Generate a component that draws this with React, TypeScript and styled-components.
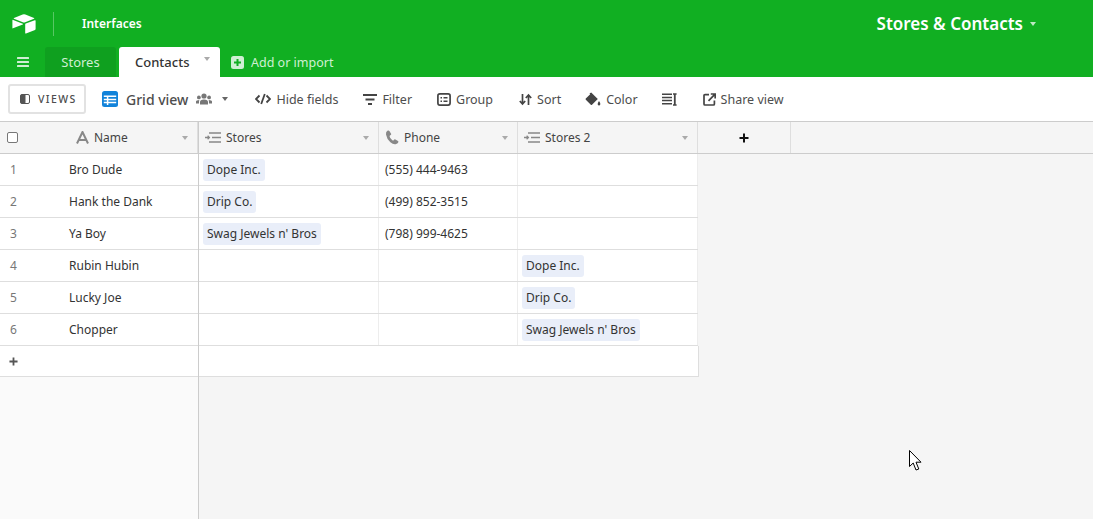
import React from 'react'
import styled, { createGlobalStyle } from 'styled-components'

const GlobalStyle = createGlobalStyle`
  html, body { margin: 0; padding: 0; height: 100%; overflow: hidden; }
  body { font-family: "Noto Sans", "Open Sans", sans-serif; background: #f5f5f5; color: #333; }
  #root { height: 100%; }
`

const Page = styled.div`
  position: relative;
  display: flex;
  flex-direction: column;
  width: 1093px;
  height: 519px;
  overflow: hidden;
`

// Header
const TopBar = styled.header`
  display: flex;
  align-items: center;
  height: 47px;
  padding-left: 12px;
  background: #11af22;
  color: #fff;
`
const Divider = styled.div`
  width: 1px;
  height: 24px;
  margin: 0 28px 0 17px;
  background: rgba(255, 255, 255, 0.3);
`
const InterfacesLink = styled.span`
  font-size: 12px;
  font-weight: 600;
`
const BaseName = styled.div`
  display: flex;
  align-items: center;
  gap: 7px;
  margin-left: auto;
  margin-right: 57px;
  font-size: 17px;
  font-weight: 600;
`
const Caret = styled.span<{ $color?: string }>`
  width: 0;
  height: 0;
  border-left: 3.5px solid transparent;
  border-right: 3.5px solid transparent;
  border-top: 4px solid ${({ $color }) => $color || '#999'};
`

// Tabs
const TabBar = styled.nav`
  display: flex;
  align-items: flex-end;
  height: 30px;
  background: #11af22;
`
const MenuButton = styled.div`
  display: flex;
  align-items: center;
  justify-content: center;
  width: 45px;
  height: 30px;
  color: #cfefd3;
`
const Tab = styled.div<{ $active?: boolean }>`
  position: relative;
  display: flex;
  align-items: center;
  height: 30px;
  box-sizing: border-box;
  border-radius: 3px 3px 0 0;
  font-size: 13px;
  ${({ $active }) =>
    $active
      ? `width: 101px; margin-left: 3px; padding-left: 16px; background: #fff; color: #333; font-weight: 500;`
      : `width: 71px; justify-content: center; background: #0fa01f; color: #cfefd3;`}
`
const TabCaret = styled.span`
  position: absolute;
  top: 10px;
  right: 10px;
  width: 0;
  height: 0;
  border-left: 3.5px solid transparent;
  border-right: 3.5px solid transparent;
  border-top: 4px solid #aaa;
`
const AddTable = styled.div`
  display: flex;
  align-items: center;
  gap: 7px;
  height: 30px;
  margin-left: 11px;
  font-size: 12.5px;
  color: #cfefd3;
`

// Toolbar
const Toolbar = styled.div`
  display: flex;
  align-items: center;
  height: 44px;
  padding-left: 8px;
  background: #fff;
  border-bottom: 1px solid #ccc;
  font-size: 12.5px;
  color: #4d4d4d;
`
const ViewsButton = styled.div`
  display: flex;
  align-items: center;
  gap: 8px;
  box-sizing: border-box;
  width: 78px;
  height: 30px;
  padding-left: 10px;
  border: 2px solid #e2e2e2;
  border-radius: 3px;
  font-size: 10.5px;
  font-weight: 500;
  letter-spacing: 1.4px;
`
const ViewName = styled.div`
  display: flex;
  align-items: center;
  margin-left: 16px;
  font-size: 14px;
  font-weight: 500;
`
const ToolItem = styled.div<{ $left: number }>`
  display: flex;
  align-items: center;
  gap: 5px;
  margin-left: ${({ $left }) => $left}px;
  white-space: nowrap;
`

// Grid
const GridArea = styled.main`
  flex: 1;
  display: flex;
  min-height: 0;
`
const LeftPane = styled.section`
  width: 198px;
  border-right: 1px solid #ccc;
  background: #fafafa;
`
const RightPane = styled.section`
  flex: 1;
  background: #f5f5f5;
`
const HeaderRow = styled.div`
  display: flex;
  height: 31px;
  background: #f5f5f5;
  border-bottom: 1px solid #ccc;
`
const HeaderCell = styled.div<{ $width: number; $left?: number }>`
  display: flex;
  align-items: center;
  gap: 5px;
  box-sizing: border-box;
  width: ${({ $width }) => $width}px;
  padding: 0 9px 0 ${({ $left }) => $left ?? 6}px;
  border-right: 1px solid #dedede;
  font-size: 12px;
  color: #444;
  ${Caret} { margin-left: auto; }
`
const AddField = styled.div`
  display: flex;
  align-items: center;
  justify-content: center;
  box-sizing: border-box;
  width: 93px;
  border-right: 1px solid #dedede;
`
const RowCheck = styled.div`
  box-sizing: border-box;
  width: 11px;
  height: 11px;
  margin: 0 54px 0 7px;
  border: 1px solid #777;
  border-radius: 2px;
  background: #fff;
`
const Row = styled.div<{ $width?: number }>`
  display: flex;
  height: 31px;
  width: ${({ $width }) => ($width ? `${$width}px` : 'auto')};
  background: #fff;
  border-bottom: 1px solid #dedede;
`
const RowNumber = styled.div`
  display: flex;
  align-items: center;
  width: 69px;
  padding-left: 10px;
  box-sizing: border-box;
  font-size: 12px;
  color: #777;
`
const NameCell = styled.div`
  display: flex;
  align-items: center;
  font-size: 12px;
  color: #333;
`
const Cell = styled.div<{ $width: number }>`
  display: flex;
  align-items: center;
  box-sizing: border-box;
  width: ${({ $width }) => $width}px;
  padding: 0 4px;
  border-right: 1px solid #ededed;
  font-size: 12px;
  color: #333;
`
const PhoneText = styled.span`
  padding-left: 2px;
`
const Chip = styled.span`
  padding: 2px 4px;
  border-radius: 3px;
  background: #e9eef9;
  line-height: 18px;
  white-space: nowrap;
`
const AddRow = styled.div`
  display: flex;
  align-items: center;
  height: 30px;
  padding-left: 9px;
  background: #fff;
  border-bottom: 1px solid #dedede;
`
const EmptyAddRow = styled.div`
  width: 499px;
  height: 30px;
  background: #fff;
  border-bottom: 1px solid #dedede;
  border-right: 1px solid #dedede;
`
const Pointer = styled.svg`
  position: absolute;
  left: 909px;
  top: 450px;
`

const AirtableLogo = () => (
  <svg width="24" height="20" viewBox="0 0 24 20" fill="#fff">
    <path d="M10.6 0.6 L2 4 Q1.3 4.4 2 4.8 L10.8 8.2 Q12 8.6 13.2 8.2 L22 4.8 Q22.7 4.4 22 4 L13.4 0.6 Q12 0.1 10.6 0.6Z" />
    <path d="M13.2 10.4 V19 Q13.2 19.8 14 19.5 L23 16 Q23.6 15.7 23.6 15 V6.8 Q23.6 6 22.8 6.3 L13.8 9.6 Q13.2 9.8 13.2 10.4Z" />
    <path d="M0.4 6.4 V14 Q0.4 14.6 1 14.3 L10.8 10.4 Q11.4 10 10.8 9.7 L1.2 5.9 Q0.4 5.6 0.4 6.4Z" />
  </svg>
)

const MenuIcon = () => (
  <svg width="12" height="10" viewBox="0 0 12 10" fill="currentColor">
    <rect width="12" height="2" rx="0.5" />
    <rect y="4" width="12" height="2" rx="0.5" />
    <rect y="8" width="12" height="2" rx="0.5" />
  </svg>
)

const PlusSquare = () => (
  <svg width="13" height="13" viewBox="0 0 13 13">
    <rect width="13" height="13" rx="2.5" fill="#cfefd3" />
    <path d="M6.5 3v7M3 6.5h7" stroke="#11af22" strokeWidth="2" />
  </svg>
)

const SidebarIcon = () => (
  <svg width="10" height="10" viewBox="0 0 10 10">
    <rect x="0.5" y="0.5" width="9" height="9" rx="1.5" fill="none" stroke="#555" />
    <rect x="0.5" y="0.5" width="5" height="9" rx="1" fill="#555" />
  </svg>
)

const GridIcon = () => (
  <svg width="16" height="16" viewBox="0 0 16 16">
    <rect width="16" height="16" rx="2.5" fill="#1283da" />
    <path d="M1.8 5.2h12.4M1.8 8.4h12.4M1.8 11.6h12.4M5.6 5v9" stroke="#fff" strokeWidth="1.5" />
  </svg>
)

const PeopleIcon = () => (
  <svg width="16" height="12" viewBox="0 0 16 12" fill="#777">
    <circle cx="8" cy="3" r="2.6" />
    <circle cx="2.9" cy="4.4" r="1.9" />
    <circle cx="13.1" cy="4.4" r="1.9" />
    <path d="M4 11.5 V9 Q4 6.4 8 6.4 Q12 6.4 12 9 V11.5Z" />
    <path d="M0 10.5 V8.6 Q0 7 3.3 7 Q2.9 8 3 10.5Z" />
    <path d="M16 10.5 V8.6 Q16 7 12.7 7 Q13.1 8 13 10.5Z" />
  </svg>
)

const HideIcon = () => (
  <svg width="16" height="12" viewBox="0 0 16 12" fill="none" stroke="#444" strokeWidth="1.8">
    <path d="M4.5 2.5 L1 6 L4.5 9.5" />
    <path d="M11.5 2.5 L15 6 L11.5 9.5" />
    <path d="M9.8 1 L6.2 11" />
  </svg>
)

const FilterIcon = () => (
  <svg width="14" height="11" viewBox="0 0 14 11" fill="#444">
    <rect width="14" height="2" />
    <rect x="2.5" y="4.5" width="9" height="2" />
    <rect x="5" y="9" width="4" height="2" />
  </svg>
)

const GroupIcon = () => (
  <svg width="14" height="13" viewBox="0 0 14 13" fill="none" stroke="#444">
    <rect x="0.9" y="0.9" width="12.2" height="11.2" rx="2" strokeWidth="1.7" />
    <path d="M3.5 4.7h1.5M6.5 4.7h4M3.5 8.2h1.5M6.5 8.2h4" strokeWidth="1.5" />
  </svg>
)

const SortIcon = () => (
  <svg width="13" height="13" viewBox="0 0 13 13" fill="none" stroke="#444" strokeWidth="1.7">
    <path d="M3.5 1v10M0.8 8 L3.5 11 L6.2 8" />
    <path d="M9.5 12V2M6.8 5 L9.5 2 L12.2 5" />
  </svg>
)

const ColorIcon = () => (
  <svg width="16" height="14" viewBox="0 0 16 14" fill="#444">
    <path d="M6.2 0.4 L12.8 7 L7 12.8 Q6.4 13.3 5.8 12.8 L0.8 7.8 Q0.3 7.2 0.8 6.6 L5.2 2.3 L4.5 1.6Z" />
    <path d="M14 9 Q15.8 11.4 15.3 12.5 A1.4 1.4 0 0 1 12.7 12.5 Q12.3 11.4 14 9Z" />
  </svg>
)

const RowHeightIcon = () => (
  <svg width="15" height="13" viewBox="0 0 15 13" fill="none" stroke="#444">
    <path d="M0 1.2h10M0 4.4h10M0 7.6h10M0 10.8h10" strokeWidth="1.5" />
    <path d="M12.8 1v11" strokeWidth="1.8" />
    <path d="M11 1h3.6M11 12h3.6" strokeWidth="1.5" />
  </svg>
)

const ShareIcon = () => (
  <svg width="13" height="13" viewBox="0 0 13 13" fill="none" stroke="#444" strokeWidth="1.7">
    <path d="M6 1.6H2Q1 1.6 1 2.6V11Q1 12 2 12H10.4Q11.4 12 11.4 11V7.5" />
    <path d="M5.5 7.8 L11.5 1.6M7.8 1h4.4v4.4" />
  </svg>
)

const TextIcon = () => (
  <svg width="13" height="13" viewBox="0 0 13 13" fill="none" stroke="#888" strokeWidth="2">
    <path d="M1 12.5 L6.5 1 L12 12.5M3 9h7" />
  </svg>
)

const LinkIcon = () => (
  <svg width="16" height="11" viewBox="0 0 16 11" fill="none" stroke="#888" strokeWidth="1.3">
    <path d="M4 1h12M0 5.5h4M7 5.5h9M4 10h12" />
    <path d="M2.6 3.8 L4.4 5.5 L2.6 7.2" />
  </svg>
)

const PhoneIcon = () => (
  <svg width="14" height="15" viewBox="0 0 14 15" fill="#888">
    <path d="M2.8 0.6 Q0.6 1.6 1 4.4 Q1.8 9 5.4 12.2 Q8.4 14.8 11.2 14 Q13 13.3 13.4 12 Q13.5 11.4 13 11.1 L10.4 9.4 Q9.8 9.1 9.3 9.6 L8.3 10.6 Q7.6 10.8 6.6 9.6 Q4.6 7.4 4.6 6.2 Q4.6 5.7 5.3 5.3 L6 4.7 Q6.4 4.3 6.1 3.7 L4.4 0.9 Q3.8 0.2 2.8 0.6Z" />
  </svg>
)

const PlusIcon = ({ size, color }: { size: number; color: string }) => (
  <svg width={size} height={size} viewBox="0 0 10 10">
    <path d="M5 0.5v9M0.5 5h9" stroke={color} strokeWidth="2" />
  </svg>
)

type Contact = { name: string; store?: string; phone?: string; store2?: string }

const contacts: Contact[] = [
  { name: 'Bro Dude', store: 'Dope Inc.', phone: '(555) 444-9463' },
  { name: 'Hank the Dank', store: 'Drip Co.', phone: '(499) 852-3515' },
  { name: 'Ya Boy', store: "Swag Jewels n' Bros", phone: '(798) 999-4625' },
  { name: 'Rubin Hubin', store2: 'Dope Inc.' },
  { name: 'Lucky Joe', store2: 'Drip Co.' },
  { name: 'Chopper', store2: "Swag Jewels n' Bros" },
]

export default function App() {
  return (
    <Page>
      <GlobalStyle />
      <TopBar>
        <AirtableLogo />
        <Divider />
        <InterfacesLink>Interfaces</InterfacesLink>
        <BaseName>
          Stores &amp; Contacts
          <Caret $color="#bfe9c4" />
        </BaseName>
      </TopBar>
      <TabBar>
        <MenuButton>
          <MenuIcon />
        </MenuButton>
        <Tab>Stores</Tab>
        <Tab $active>
          Contacts
          <TabCaret />
        </Tab>
        <AddTable>
          <PlusSquare />
          Add or import
        </AddTable>
      </TabBar>
      <Toolbar>
        <ViewsButton>
          <SidebarIcon />
          VIEWS
        </ViewsButton>
        <ViewName>
          <GridIcon />
          <ToolItem $left={8}>Grid view</ToolItem>
          <ToolItem $left={8}><PeopleIcon /></ToolItem>
          <ToolItem $left={10}><Caret $color="#666" /></ToolItem>
        </ViewName>
        <ToolItem $left={27}><HideIcon />Hide fields</ToolItem>
        <ToolItem $left={25}><FilterIcon />Filter</ToolItem>
        <ToolItem $left={25}><GroupIcon />Group</ToolItem>
        <ToolItem $left={26}><SortIcon />Sort</ToolItem>
        <ToolItem $left={24}><ColorIcon />Color</ToolItem>
        <ToolItem $left={24}><RowHeightIcon /></ToolItem>
        <ToolItem $left={26}><ShareIcon />Share view</ToolItem>
      </Toolbar>
      <GridArea>
        <LeftPane>
          <HeaderRow>
            <RowCheck style={{ alignSelf: 'center' }} />
            <HeaderCell $width={126} $left={4}>
              <TextIcon />
              Name
              <Caret $color="#aaa" />
            </HeaderCell>
          </HeaderRow>
          {contacts.map((c, i) => (
            <Row key={c.name}>
              <RowNumber>{i + 1}</RowNumber>
              <NameCell>{c.name}</NameCell>
            </Row>
          ))}
          <AddRow>
            <PlusIcon size={9} color="#555" />
          </AddRow>
        </LeftPane>
        <RightPane>
          <HeaderRow>
            <HeaderCell $width={180}>
              <LinkIcon />
              Stores
              <Caret $color="#aaa" />
            </HeaderCell>
            <HeaderCell $width={139}>
              <PhoneIcon />
              Phone
              <Caret $color="#aaa" />
            </HeaderCell>
            <HeaderCell $width={180}>
              <LinkIcon />
              Stores 2
              <Caret $color="#aaa" />
            </HeaderCell>
            <AddField>
              <PlusIcon size={10} color="#111" />
            </AddField>
          </HeaderRow>
          {contacts.map((c) => (
            <Row key={c.name} $width={499}>
              <Cell $width={180}>{c.store && <Chip>{c.store}</Chip>}</Cell>
              <Cell $width={139}>{c.phone && <PhoneText>{c.phone}</PhoneText>}</Cell>
              <Cell $width={180}>{c.store2 && <Chip>{c.store2}</Chip>}</Cell>
            </Row>
          ))}
          <EmptyAddRow />
        </RightPane>
      </GridArea>
      <Pointer width="14" height="22" viewBox="0 0 14 22">
        <path d="M0.5 0.5 V16.5 L4.2 13 L7 20 L9.8 19 L7 12.2 H12 Z" fill="#fff" stroke="#000" strokeWidth="1" />
      </Pointer>
    </Page>
  )
}
